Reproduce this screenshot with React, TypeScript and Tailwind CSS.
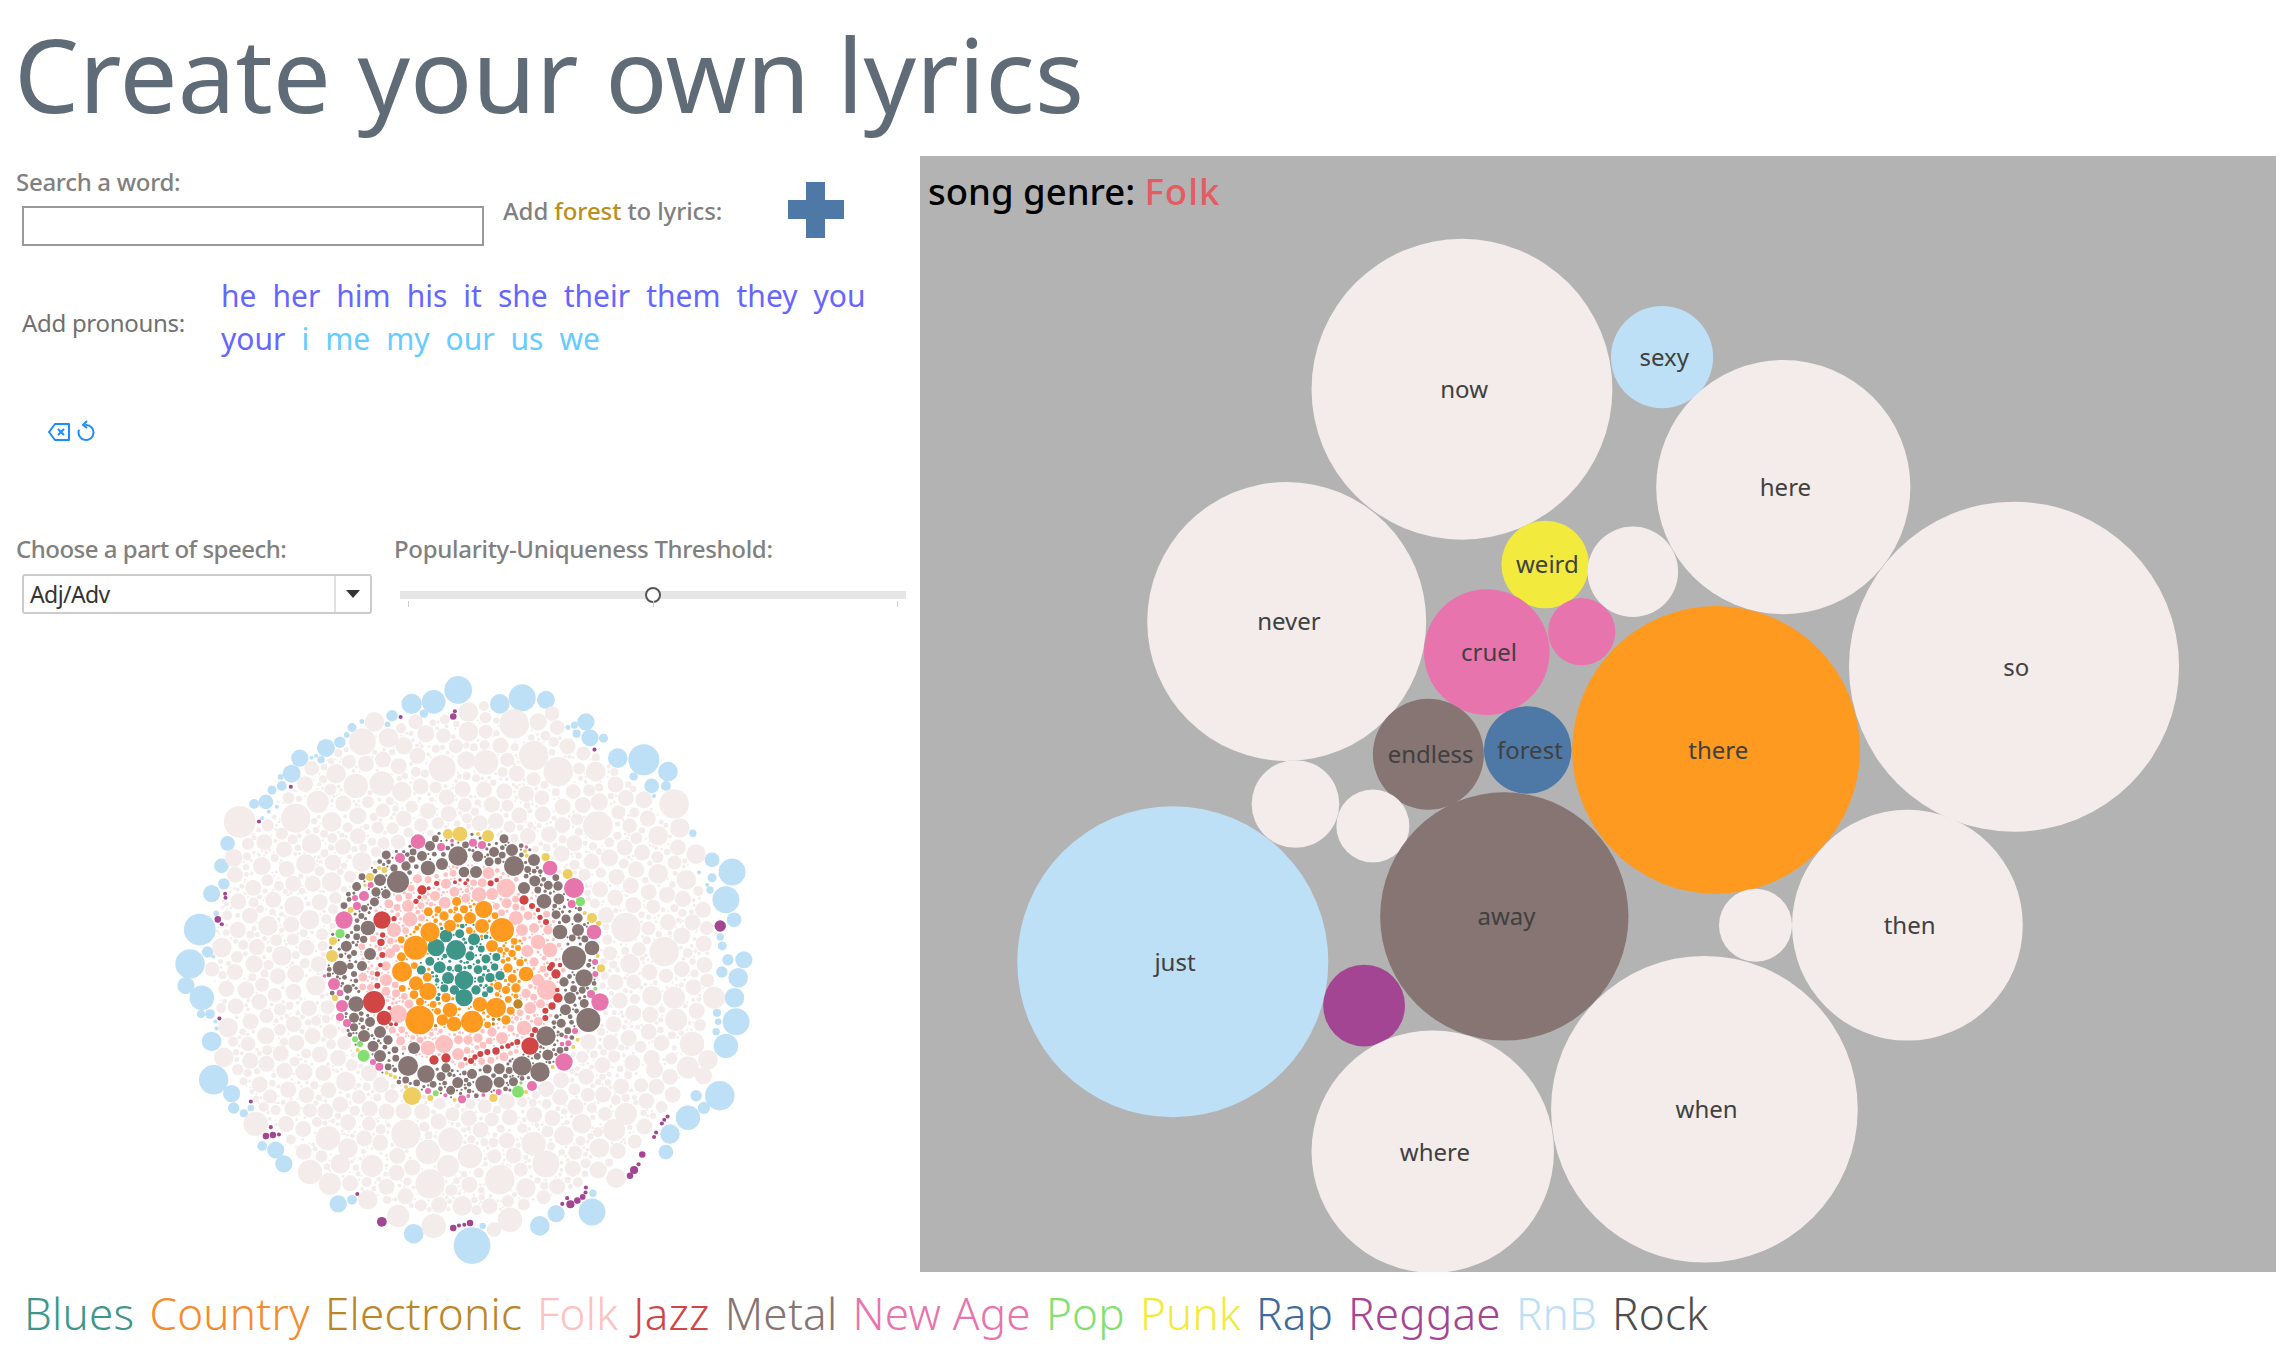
type Dot = [number, number, number];
type Filled = { x: number; y: number; r: number; c: string };

const OFF = "#f3ecea";
const SKY = "#bde0f6";
const PLUM = "#a34593";
const TEAL = "#3e9689";
const ORANGE = "#fe9a1f";
const GOLD = "#bc8627";
const ROSE = "#fec1c1";
const RED = "#d14545";
const GRAY = "#867573";
const PINK = "#e874ae";
const YELLOW = "#eecd61";
const GREEN = "#83e070";

// outer ring, read off a 2.45x crop
const outerSky: Dot[] = [
  [755,98,34],[695,127,29],[641,132,25],[912,117,33],[857,132,24],[970,122,22],[593,161,14],[671,156,10],[1068,176,21],[1078,215,21],[1045,205,10],[1111,216,11],[1146,265,24],[1210,269,38],[1269,298,24],[1229,333,18],[1264,333,12],[1185,310,10],[431,240,22],[465,226,14],[495,190,11],[367,265,21],[347,303,22],[323,333,12],[299,343,11],[284,372,18],[255,377,12],[190,474,18],[175,529,18],[181,573,14],[151,597,21],[122,685,39],[98,769,36],[141,740,14],[88,822,21],[127,852,30],[147,892,12],[125,892,10],[151,959,24],[156,1053,36],[200,1087,21],[205,1122,14],[230,1135,10],[247,1122,8],[275,1215,12],[308,1225,21],[328,1259,21],[461,1357,21],[495,1347,12],[646,1430,24],[789,1459,45],[815,1411,8],[955,1411,24],[995,1381,21],[1083,1377,33],[1085,1331,9],[1264,1230,18],[1274,1186,24],[1318,1146,30],[1357,1122,15],[1396,1092,36],[1338,1092,14],[1411,970,30],[1436,911,33],[1387,935,9],[1392,911,8],[1389,889,10],[1432,852,24],[1441,803,24],[1401,789,14],[1416,759,14],[1455,759,21],[1402,725,11],[1397,703,9],[1431,661,18],[1411,612,33],[1372,588,9],[1377,558,11],[1426,544,33],[1377,514,18],[1330,449,9],[519,175,6],[482,208,7],[582,182,7],[1024,190,6],[1040,184,9],[407,259,5],[396,264,5],[419,269,9],[320,311,7],[291,396,5],[311,384,5],[275,412,5],[162,645,7],[155,751,5],[160,910,5],[163,927,5],[1235,358,5],[1345,545,5],[1365,575,5],
];
const outerPlum: Dot[] = [
  [1397,676,14],[743,163,8],[747,150,5],[614,164,5],[1089,244,5],[345,335,5],[267,420,5],[184,597,5],[185,607,5],[166,660,8],[176,672,5],[170,903,5],[247,1106,5],[296,1169,5],[284,1191,8],[301,1188,8],[316,1187,5],[508,1333,5],[568,1401,12],[743,1416,8],[757,1410,5],[770,1408,5],[784,1404,8],[1010,1357,5],[1022,1343,5],[1030,1358,10],[1047,1349,8],[1060,1340,7],[1067,1329,5],[1068,1317,5],[1176,1288,8],[1186,1274,10],[1197,1260,5],[1206,1236,8],[1235,1193,5],[1240,1182,5],[1254,1160,5],[1260,1151,5],[1268,1143,5],
];
const outerOff: Dot[] = [
  [220,421,39],[357,412,36],[550,176,24],[892,181,36],[780,152,24],[818,137,12],[951,176,21],[985,156,18],[998,190,18],[822,166,14],[780,200,24],[719,210,18],[676,205,21],[651,176,18],[584,215,24],[520,225,33],[622,235,21],[568,327,30],[504,333,30],[456,303,24],[396,290,18],[411,372,27],[617,347,24],[716,290,33],[775,270,22],[823,275,30],[940,259,36],[1000,298,36],[1092,298,24],[1037,347,18],[960,362,18],[1101,372,21],[1097,431,36],[1284,377,36],[1298,436,24],[1245,455,24],[1210,367,21],[1175,431,18],[1126,509,21],[1338,500,24],[1314,563,24],[1245,548,24],[1166,680,36],[1260,739,36],[1303,700,21],[1176,769,24],[1284,852,27],[1230,847,24],[1382,852,27],[1289,906,27],[1185,813,18],[1328,965,30],[1318,1023,27],[1367,1004,24],[1356,1043,21],[1236,1028,21],[1166,1137,27],[1137,1176,27],[1101,1220,24],[1098,1274,21],[1142,1294,24],[1058,1161,24],[1014,1190,24],[940,1210,30],[970,1259,33],[857,1298,36],[921,1318,24],[882,1396,30],[843,1420,18],[765,1362,24],[686,1308,36],[695,1411,30],[608,1387,27],[627,1186,36],[681,1230,30],[736,1200,30],[730,1264,27],[784,1240,30],[436,1196,30],[485,1220,24],[466,1259,24],[544,1264,27],[392,1279,30],[441,1308,27],[533,1347,24],[259,1161,30],[181,998,24],[191,925,24],[240,965,18],[215,1028,14],[152,782,18],[176,729,24],[205,509,22],[240,475,15],[274,529,22],[323,450,15],[396,475,24],[382,524,24],[445,421,24],[509,406,21],[558,435,15],[608,470,18],[544,470,10],[519,519,24],[445,568,24],[353,627,24],[289,676,24],[215,686,20],[323,749,24],[391,661,24],[255,769,21],[235,833,21],[357,793,21],[406,822,24],[377,1034,21],[480,1057,24],[284,945,21],[318,881,15],[441,935,18],[1229,1000,20],
];

// inner rings, read off a 3x crop
const innerSets: [string, Dot[]][] = [
  [TEAL, [[408,390,30],[348,383,26],[378,348,19],[462,358,18],[432,480,28],[432,533,26],[384,474,18],[359,442,18],[450,408,14],[474,449,13],[510,473,14],[540,467,14],[468,510,14],[524,441,11],[529,411,12],[403,510,14],[373,505,12],[495,523,9],[415,445,12],[388,445,8]]],
  [ORANGE, [[299,600,43],[456,605,33],[287,383,36],[546,330,36],[330,336,29],[246,455,30],[491,268,26],[528,563,30],[480,553,22],[402,612,22],[367,600,17],[390,570,22],[324,514,26],[288,490,21],[282,524,13],[618,462,22],[516,378,18],[486,318,21],[450,294,18],[414,294,14],[390,317,18],[372,288,14],[432,268,12],[588,504,14],[558,510,12],[572,572,12],[558,600,14],[534,498,12],[564,444,14],[600,428,11],[540,390,9],[576,400,11],[594,384,9],[300,545,12],[378,533,14]]],
  [GOLD, [[594,552,14],[347,617,5],[520,598,5],[537,598,5],[520,612,5]]],
  [ROSE, [[558,204,28],[681,510,30],[690,390,22],[654,366,22],[234,582,27],[324,684,22],[372,672,27],[612,624,22],[546,654,18],[270,298,22],[222,330,21],[264,258,18],[345,228,15],[403,215,15],[477,224,22],[516,222,18],[378,191,15],[606,330,18],[642,324,15],[684,330,14],[588,294,21],[560,250,15],[618,520,14],[642,426,14],[654,480,18],[414,702,18],[474,654,14],[516,636,14],[444,660,14],[198,438,14],[198,480,18],[228,520,12],[210,400,15],[228,385,12]]],
  [RED, [[162,546,33],[186,300,26],[192,594,22],[630,678,26],[306,210,14],[342,720,14],[378,714,14],[612,240,14],[708,462,14],[714,534,14],[696,558,11],[676,572,9],[676,594,9],[645,630,9],[636,645,7],[528,693,11],[502,696,9],[481,702,9],[465,711,8],[453,723,9],[436,717,6],[564,678,8],[546,682,6],[592,666,9],[576,672,6],[696,435,9],[690,444,9],[720,435,7],[712,510,7],[636,258,9],[654,270,7],[660,292,8],[678,306,9],[183,367,11],[187,405,9],[222,296,8],[288,244,8],[298,232,6],[326,205,6],[350,190,8],[405,187,6],[420,180,5],[436,190,6],[443,180,5],[512,190,9],[530,180,7],[188,345,8],[181,435,7],[172,462,8],[172,497,9],[208,564,6],[213,613,6],[228,613,6]]],
  [GRAY, [[234,185,33],[414,108,29],[582,138,30],[762,414,36],[805,600,36],[792,474,26],[816,384,22],[720,336,22],[672,244,22],[774,330,18],[660,756,29],[606,738,29],[678,648,29],[492,792,26],[318,762,26],[264,738,30],[180,708,18],[132,648,18],[108,552,23],[60,444,22],[144,324,22],[180,180,18],[324,144,22],[432,156,16],[468,156,18],[366,132,18],[522,96,15],[576,90,18],[642,120,18],[612,204,18],[714,198,14],[774,294,14],[750,534,18],[732,486,14],[150,402,18],[126,438,15],[102,593,15],[150,606,15],[282,684,18],[204,660,14],[180,636,18],[378,744,14],[456,762,15],[330,78,15],[306,108,15],[198,222,14],[168,216,14],[124,288,9],[131,358,11],[102,399,9],[91,438,10],[102,462,9],[102,622,12],[222,144,11],[258,138,14]]],
  [PINK, [[294,65,22],[72,300,26],[690,144,22],[762,204,30],[822,336,22],[840,546,26],[732,726,26],[636,798,15],[42,492,18],[66,558,18],[60,591,12],[81,609,12],[60,519,10],[132,228,15],[240,114,15],[111,258,12],[105,234,9],[152,195,9],[486,75,12],[459,68,12],[363,81,12],[396,62,6],[755,252,12],[178,740,12],[159,726,9],[825,426,9],[826,462,9],[813,522,12],[426,838,12],[324,813,9],[376,826,6],[536,816,9],[490,825,6],[445,828,6],[765,633,9],[745,670,9],[726,672,7],[738,650,6]]],
  [YELLOW, [[276,828,27],[420,42,22],[504,48,18],[384,42,15],[36,408,18],[39,363,12],[150,171,12],[177,144,6],[193,150,9],[135,196,5],[92,270,9],[816,294,15],[743,162,15],[677,111,12],[843,445,12],[836,310,8],[794,279,6],[833,408,6],[331,834,9],[404,840,6],[520,834,12],[618,816,6],[474,42,6],[615,93,6],[620,107,6],[45,534,9],[113,690,6],[200,759,6],[212,765,6],[225,771,6],[698,741,6],[258,801,6],[773,659,6],[760,681,6]]],
  [GREEN, [[60,341,14],[781,245,14],[131,707,18],[105,658,9],[120,672,9],[594,815,18],[347,820,9],[603,789,5],[826,506,6]]],
];

function buildCluster(): Filled[] {
  let seed = 90210;
  const rnd = () => {
    seed = (seed + 0x6d2b79f5) | 0;
    let t = Math.imul(seed ^ (seed >>> 15), 1 | seed);
    t = (t + Math.imul(t ^ (t >>> 7), 61 | t)) ^ t;
    return ((t ^ (t >>> 14)) >>> 0) / 4294967296;
  };
  const out: Filled[] = [];
  const add = (c: string) => (d: Dot) => out.push({ x: d[0] / 2.45, y: d[1] / 2.45, r: d[2] / 2.45, c });
  outerSky.forEach(add(SKY));
  outerPlum.forEach(add(PLUM));
  outerOff.forEach(add(OFF));
  innerSets.forEach(([c, list]) =>
    list.forEach((d) => out.push({ x: 170 + d[0] / 3, y: 170 + d[1] / 3, r: d[2] / 3, c })),
  );

  const cx = 312;
  const cy = 315;
  const tryPlace = (rMin: number, rMax: number, r: number, c: string, tries: number, gap = 0.3) => {
    for (let i = 0; i < tries; i++) {
      const a = rnd() * Math.PI * 2;
      const d = Math.sqrt(rMin * rMin + rnd() * (rMax * rMax - rMin * rMin));
      const x = cx + Math.cos(a) * d;
      const y = cy + Math.sin(a) * d;
      let ok = true;
      for (const o of out) {
        const dx = o.x - x;
        const dy = o.y - y;
        const m = o.r + r + gap;
        if (dx * dx + dy * dy < m * m) {
          ok = false;
          break;
        }
      }
      if (ok) out.push({ x, y, r, c });
    }
  };

  // fill the rings from the big dots down to the specks
  tryPlace(62, 102, 6, ROSE, 200);
  tryPlace(106, 134, 5.5, GRAY, 120);
  for (const [r, n] of [[4.5, 400], [3.4, 800], [2.4, 1200], [1.6, 1500], [1.1, 1500]] as const) {
    tryPlace(0, 42, r, TEAL, n / 4);
    tryPlace(32, 66, r, ORANGE, n / 2);
    tryPlace(62, 102, r, ROSE, n);
    tryPlace(106, 134, r, GRAY, n);
  }
  for (const r of [8, 7, 6, 5, 4, 3.2, 2.5, 1.9, 1.4, 1]) tryPlace(134, 248, r, OFF, 3000, 0.15);
  tryPlace(130, 142, 1.8, PINK, 80);
  return out;
}

const cluster = buildCluster();

const S = 1.4605;
const bubbles: { x: number; y: number; r: number; c: string; label?: string }[] = [
  { x: 1001, y: 266.5, r: 103, c: OFF, label: "now" },
  { x: 1138, y: 244.5, r: 35, c: SKY, label: "sexy" },
  { x: 1221, y: 333.5, r: 87, c: OFF, label: "here" },
  { x: 1379, y: 456.5, r: 113, c: OFF, label: "so" },
  { x: 881, y: 425.5, r: 95.5, c: OFF, label: "never" },
  { x: 1058, y: 386.5, r: 30, c: "#f2ea3d", label: "weird" },
  { x: 1118, y: 391.5, r: 31, c: OFF },
  { x: 1083, y: 432.5, r: 23, c: PINK },
  { x: 1018, y: 446.5, r: 43, c: PINK, label: "cruel" },
  { x: 1175, y: 513.5, r: 98.5, c: ORANGE, label: "there" },
  { x: 978, y: 516.5, r: 38, c: GRAY, label: "endless" },
  { x: 1046, y: 513.5, r: 30, c: "#4e79a7", label: "forest" },
  { x: 887, y: 550.5, r: 30, c: OFF },
  { x: 940, y: 565.5, r: 25, c: OFF },
  { x: 1030, y: 627.5, r: 85, c: GRAY, label: "away" },
  { x: 803, y: 658.5, r: 106.5, c: SKY, label: "just" },
  { x: 1306, y: 633.5, r: 79, c: OFF, label: "then" },
  { x: 1202, y: 633.5, r: 25, c: OFF },
  { x: 934, y: 688.5, r: 28, c: PLUM },
  { x: 981, y: 788.5, r: 83, c: OFF, label: "where" },
  { x: 1167, y: 759.5, r: 105, c: OFF, label: "when" },
];

const theirs = ["he", "her", "him", "his", "it", "she", "their", "them", "they", "you", "your"];
const ours = ["i", "me", "my", "our", "us", "we"];

const genres: [string, string][] = [
  ["Blues", "text-[#3e9689]"],
  ["Country", "text-[#f58b2a]"],
  ["Electronic", "text-[#bc8627]"],
  ["Folk", "text-[#fec1c1]"],
  ["Jazz", "text-[#d14545]"],
  ["Metal", "text-[#867573]"],
  ["New Age", "text-[#e874ae]"],
  ["Pop", "text-[#83e070]"],
  ["Punk", "text-[#f2ea3d]"],
  ["Rap", "text-[#3f6b9c]"],
  ["Reggae", "text-[#a34593]"],
  ["RnB", "text-[#bde0f6]"],
  ["Rock", "text-[#4d4d4d]"],
];

export default function App() {
  return (
    <div className="w-[2290px] h-[1346px] bg-white flex flex-col overflow-hidden font-['Noto_Sans',sans-serif]">
      <h1 className="h-[156px] pl-[14px] text-[103px] leading-[146px] text-[#5f6b77] whitespace-nowrap">
        Create your own lyrics
      </h1>

      <div className="flex h-[1116px]">
        <div className="w-[920px] shrink-0 flex flex-col">
          {/* Search row */}
          <div className="h-[104px] shrink-0 flex pl-4 pt-[10px]">
            <div className="w-[487px] shrink-0">
              <p className="text-[24px] leading-8 text-[#808080] font-medium tracking-[-0.3px]">Search a word:</p>
              <div className="ml-[6px] mt-[8px] w-[462px] h-[40px] border-2 border-[#999]" />
            </div>
            <p className="mt-[29px] w-[285px] shrink-0 text-[24px] leading-8 text-[#808080] font-medium tracking-[-0.1px]">
              Add <span className="text-[#b8901f]">forest</span> to lyrics:
            </p>
            <svg viewBox="0 0 56 56" className="w-14 h-14 mt-[16px]" fill="#4e79a7">
              <path d="M18 0h19v18h19v19H37v19H18V37H0V18h18z" />
            </svg>
          </div>

          {/* Pronouns */}
          <div className="h-[124px] shrink-0 flex items-start pl-[22px] pt-[14px]">
            <p className="w-[199px] shrink-0 mt-[33px] text-[24px] leading-8 text-[#707070] tracking-[-0.3px]">
              Add pronouns:
            </p>
            <div className="w-[660px] flex flex-wrap gap-x-[16px] text-[30px] leading-[43px]">
              {theirs.map((w) => (
                <span key={w} className="text-[#6666ff]">{w}</span>
              ))}
              {ours.map((w) => (
                <span key={w} className="text-[#66ccff]">{w}</span>
              ))}
            </div>
          </div>

          {/* Reset icons */}
          <div className="h-[149px] shrink-0 flex items-start gap-[7px] pl-[48px] pt-[38px]">
            <svg viewBox="0 0 22 18" className="w-[22px] h-[18px] mt-[1px]" fill="none" stroke="#1a8cff" strokeWidth="2">
              <path d="M7 1h14v16H7L1 9z" strokeLinejoin="round" />
              <path d="M10 6l6 6M16 6l-6 6" />
            </svg>
            <svg viewBox="0 0 18 22" className="w-[18px] h-[22px] -mt-[2px]" fill="none" stroke="#1a8cff" strokeWidth="2">
              <path d="M9 5a7.5 7.5 0 1 1-7.2 5.5" strokeLinecap="round" />
              <path d="M10 1L6 5l4 3" />
            </svg>
          </div>

          {/* Filters */}
          <div className="h-[117px] shrink-0 flex">
            <div className="w-[394px] shrink-0 pl-4">
              <p className="text-[24px] leading-8 text-[#808080] font-medium tracking-[-0.5px]">Choose a part of speech:</p>
              <div className="ml-[6px] mt-[9px] w-[350px] h-[40px] border-2 border-[#ccc] rounded-[3px] flex items-center">
                <span className="flex-1 pl-[6px] text-[23px] text-[#333] tracking-[-0.6px]">Adj/Adv</span>
                <span className="w-[36px] h-full border-l-2 border-[#e0e0e0] flex items-center justify-center">
                  <svg viewBox="0 0 14 8" className="w-[14px] h-2" fill="#333"><path d="M0 0h14L7 8z" /></svg>
                </span>
              </div>
            </div>
            <div className="flex-1">
              <p className="text-[24px] leading-8 text-[#808080] font-medium tracking-[-0.3px]">Popularity-Uniqueness Threshold:</p>
              <div className="relative ml-[6px] mt-[26px] w-[506px] h-2 bg-[#e6e6e6]">
                <span className="absolute left-[245px] -top-[4px] w-4 h-4 rounded-full bg-white border-2 border-[#555]" />
                <span className="absolute left-[8px] top-[10px] w-px h-[6px] bg-[#ccc]" />
                <span className="absolute left-[253px] top-[10px] w-px h-[6px] bg-[#ccc]" />
                <span className="absolute left-[497px] top-[10px] w-px h-[6px] bg-[#ccc]" />
              </div>
            </div>
          </div>

          {/* Word cluster */}
          <svg viewBox="0 0 640 622" className="ml-[150px] w-[640px] h-[622px] shrink-0">
            {cluster.map((d, i) => (
              <circle key={i} cx={d.x} cy={d.y} r={d.r} fill={d.c} />
            ))}
          </svg>
        </div>

        {/* Genre bubbles */}
        <div className="relative w-[1356px] shrink-0 bg-[#b3b3b3] pl-2 pt-[11px]">
          <p className="text-[36.5px] leading-[48px] text-black font-medium">
            song genre: <span className="text-[#e35c62] tracking-[1px]">Folk</span>
          </p>
          <svg viewBox="920 156 1356 1116" className="absolute inset-0 w-full h-full">
            {bubbles.map((b, i) => (
              <g key={i}>
                <circle cx={b.x * S} cy={b.y * S} r={b.r * S} fill={b.c} />
                {b.label && (
                  <text x={(b.x + 1.5) * S} y={b.y * S + 9} textAnchor="middle" fontSize="24" fill="#404040">
                    {b.label}
                  </text>
                )}
              </g>
            ))}
          </svg>
        </div>
      </div>

      {/* Legend */}
      <div className="h-[74px] flex items-center gap-x-[15px] pl-[24px] pt-2 text-[44px] font-light tracking-[0.25px] whitespace-nowrap">
        {genres.map(([g, c]) => (
          <span key={g} className={c}>{g}</span>
        ))}
      </div>
    </div>
  );
}
